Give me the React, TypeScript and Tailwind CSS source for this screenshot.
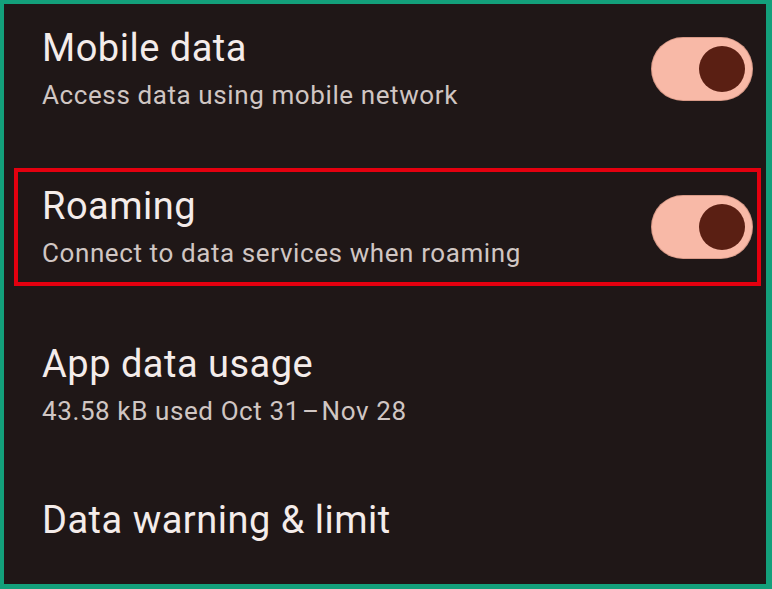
import React from "react";

function Toggle() {
  return (
    <div className="flex h-[62px] w-[100px] shrink-0 items-center justify-end rounded-full bg-[#f8b9a7] pr-[7px] shadow-[0_0_0_1px_#d89a88]">
      <div className="h-[46px] w-[46px] rounded-full bg-[#5a1f13]" />
    </div>
  );
}

function Title({ children }: { children: React.ReactNode }) {
  return (
    <div className="h-[44px] whitespace-nowrap text-[38px] leading-[44px] tracking-[0.5px] text-[#f4ecea]">
      {children}
    </div>
  );
}

function Sub({ children }: { children: React.ReactNode }) {
  return (
    <div className="mt-[8px] h-[34px] whitespace-nowrap text-[26px] leading-[34px] tracking-[0.6px] text-[#d0c6c3]">
      {children}
    </div>
  );
}

export default function App() {
  return (
    <div
      className="h-[589px] w-[772px] overflow-hidden border-t-[4px] border-l-[4px] border-r-[6px] border-b-[5px] border-[#13a07b] bg-[#1f1717]"
      style={{ fontFamily: "Roboto, 'Noto Sans', sans-serif" }}
    >
      <div className="flex flex-col">
        <div className="flex items-center pl-[38px] pr-[14px] pt-[22px]">
          <div className="flex-1">
            <Title>Mobile data</Title>
            <Sub>Access data using mobile network</Sub>
          </div>
          <Toggle />
        </div>

        <div className="ml-[10px] mr-[5px] mt-[56px] flex items-center border-[4px] border-[#e3000f] pl-[24px] pr-[5px] pt-[12px] pb-[12px]">
          <div className="flex-1">
            <Title>Roaming</Title>
            <Sub>Connect to data services when roaming</Sub>
          </div>
          <Toggle />
        </div>

        <div className="mt-[56px] pl-[38px]">
          <Title>App data usage</Title>
          <Sub>
            43.58 kB used Oct 31<span className="mx-[2px]">–</span>Nov 28
          </Sub>
        </div>

        <div className="mt-[70px] pl-[38px]">
          <Title>Data warning &amp; limit</Title>
        </div>
      </div>
    </div>
  );
}
